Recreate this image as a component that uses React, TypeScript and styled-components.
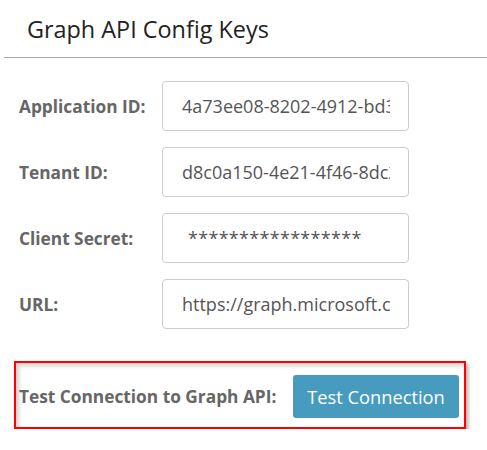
import React from "react";
import styled, { createGlobalStyle } from "styled-components";

const GlobalStyle = createGlobalStyle`
  body {
    margin: 0;
    background: #fff;
    font-family: "Open Sans", "Noto Sans", sans-serif;
  }
`;

const Panel = styled.div`
  width: 483px;
  margin-left: 4px;
  display: flex;
  flex-direction: column;
`;

const Header = styled.div`
  height: 58px;
  padding-left: 23px;
  display: flex;
  align-items: center;
  border-bottom: 1px solid #aaa;
  box-sizing: border-box;
`;

const Title = styled.h2`
  margin: 0;
  font-size: 23.4px;
  font-weight: 400;
  color: #222;
`;

const Body = styled.div`
  padding: 23px 0 0 15px;
  display: flex;
  flex-direction: column;
  gap: 16px;
`;

const Row = styled.div`
  display: flex;
  align-items: center;
`;

const Label = styled.label`
  width: 143px;
  font-size: 17.3px;
  font-weight: 700;
  color: #666;
`;

const Field = styled.input<{ $indent?: number; $spacing?: number }>`
  width: 247px;
  height: 50px;
  box-sizing: border-box;
  border: 1px solid #ccc;
  border-radius: 4px;
  padding: 0 18px 0 ${({ $indent }) => $indent ?? 19}px;
  font-family: inherit;
  font-size: 18px;
  letter-spacing: ${({ $spacing }) => $spacing ?? 0}px;
  color: #555;
  background: #fff;
  outline: none;
`;

const TestBox = styled.div`
  margin: 32px 0 0 10px;
  width: 452px;
  height: 68px;
  box-sizing: border-box;
  border: 2px solid #f00;
  padding: 12px 5px 9px 3px;
  display: flex;
  align-items: center;
  justify-content: space-between;
  box-shadow: 2px 3px 4px rgba(0, 0, 0, 0.35),
    inset 3px 3px 4px rgba(0, 0, 0, 0.18);
`;

const TestLabel = styled.span`
  font-size: 17.3px;
  font-weight: 700;
  color: #666;
`;

const Button = styled.button`
  width: 166px;
  height: 43px;
  border: none;
  border-radius: 3px;
  background: #479bbe;
  color: #fff;
  font-family: inherit;
  font-size: 18.3px;
  cursor: pointer;
`;

const fields = [
  { label: "Application ID:", value: "4a73ee08-8202-4912-bd3e-7c1f" },
  { label: "Tenant ID:", value: "d8c0a150-4e21-4f46-8dc2-91ab" },
  { label: "Client Secret:", value: "*****************", indent: 25, spacing: 0.3 },
  { label: "URL:", value: "https://graph.microsoft.com" },
];

const App = () => {
  return (
    <>
      <GlobalStyle />
      <Panel>
        <Header>
          <Title>Graph API Config Keys</Title>
        </Header>
        <Body>
          {fields.map((f) => (
            <Row key={f.label}>
              <Label>{f.label}</Label>
              <Field
                readOnly
                value={f.value}
                $indent={f.indent}
                $spacing={f.spacing}
              />
            </Row>
          ))}
        </Body>
        <TestBox>
          <TestLabel>Test Connection to Graph API:</TestLabel>
          <Button>Test Connection</Button>
        </TestBox>
      </Panel>
    </>
  );
};

export default App;
